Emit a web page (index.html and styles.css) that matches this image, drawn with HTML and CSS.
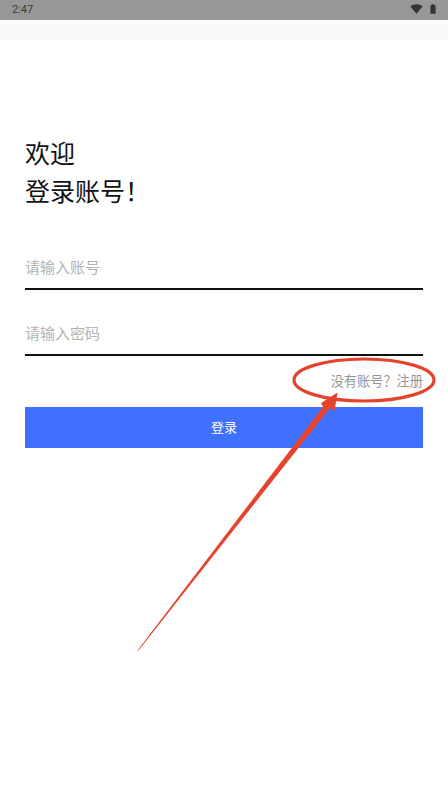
FILE: index.html
```html
<!DOCTYPE html>
<html lang="zh">
<head>
<meta charset="utf-8">
<title>登录</title>
<link rel="stylesheet" href="styles.css">
</head>
<body>
<div class="screen">
  <div class="status">
    <span class="time">2:47</span>
    <span class="status-icons">
      <svg class="wifi" width="13" height="10" viewBox="0 0 14 10"><path d="M0.5 2.2C2.2 .9 4.4 0 7 0s4.8 .9 6.500 2.200L7 10z" fill="#333"/></svg>
      <svg class="battery" width="6" height="10" viewBox="0 0 7 11"><path d="M2 0h2.500v1H6.500v10H.5V1H2z" fill="#333"/></svg>
    </span>
  </div>
  <div class="appbar"></div>
  <main class="content">
    <h1 class="title">欢迎<br>登录账号！</h1>
    <div class="field">请输入账号</div>
    <div class="field second">请输入密码</div>
    <div class="register">没有账号？注册</div>
    <button class="login">登录</button>
  </main>
  <svg class="markup" width="448" height="797" viewBox="0 0 448 797">
    <ellipse cx="364" cy="380" rx="70" ry="21" fill="none" stroke="#e5432d" stroke-width="3.200"/>
    <path d="M137.500 650.500L323 407L321 403L337.500 392.500L334.500 411L330 408L138.500 650.500z" fill="#e5432d"/>
  </svg>
</div>
</body>
</html>
```
FILE: styles.css
```css
* { box-sizing: border-box; }
html, body { margin: 0; padding: 0; background: #fff; }
body { font-family: "Noto Sans CJK SC", "Roboto", sans-serif; }
.screen { position: relative; width: 448px; height: 797px; overflow: hidden; background: #fff; }
.status {
  height: 20px; background: #979797; display: flex; align-items: center;
  justify-content: space-between; padding: 0 12px 0 12px;
}
.time { font-family: Roboto, sans-serif; font-size: 11px; color: #3c3c3c; line-height: 20px; }
.status-icons { display: flex; align-items: center; gap: 7px; margin-bottom: 2px; }
.status-icons svg { display: block; }
.appbar { height: 20px; background: #fafafa; }
.content { padding: 0 25px; }
.title {
  margin: 0; padding-top: 93px; font-size: 25px; font-weight: 400; line-height: 38px; color: #111;
}
.field {
  height: 50px; margin-top: 31px; border-bottom: 2px solid #111; color: #b3b3b3;
  font-size: 15px; line-height: 22px; padding-top: 16px;
}
.field.second { margin-top: 16px; }
.register {
  margin-top: 14px; height: 21px; line-height: 21px; text-align: right; font-size: 13.200px; color: #959595;
}
.login {
  display: block; width: 100%; height: 41px; margin-top: 16px; border: 0; background: #4070ff;
  color: #fff; font: 400 13px/39px "Noto Sans CJK SC", sans-serif; padding: 0 0 2px;
}
.markup { position: absolute; left: 0; top: 0; pointer-events: none; }
```
